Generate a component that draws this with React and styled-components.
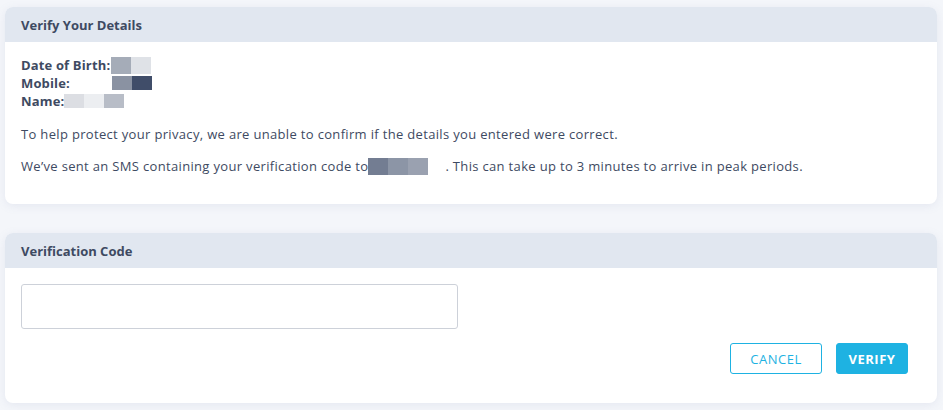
import React from "react";
import styled, { createGlobalStyle } from "styled-components";

const Global = createGlobalStyle`
  html, body { margin: 0; padding: 0; background: #f4f6fa; }
  body { font-family: "Open Sans", "DejaVu Sans", sans-serif; color: #3e4a62; }
  * { box-sizing: border-box; }
`;

const Page = styled.div`
  width: 943px;
  height: 410px;
  padding: 7px 6px 0 5px;
  display: flex;
  flex-direction: column;
  gap: 29px;
`;

const Card = styled.section`
  background: #fff;
  border-radius: 8px;
  overflow: hidden;
  box-shadow: 0 2px 10px rgba(120, 135, 170, 0.12);
`;

const CardHeader = styled.header`
  height: 35px;
  background: #e1e7f0;
  display: flex;
  align-items: center;
  padding: 0 16px;
  font-size: 13px;
  font-weight: 700;
  color: #3e4a62;
`;

const CardBody = styled.div`
  padding: ${(p) => p.$pad || "14px 16px 29px"};
  font-size: 13px;
`;

const Details = styled.div`
  display: flex;
  flex-direction: column;
  font-weight: 700;
  line-height: 18px;
  margin-bottom: 15px;
  letter-spacing: 0.15px;
`;

const DetailRow = styled.div`
  display: flex;
  align-items: center;
  height: 18px;
`;

const Blur = styled.span`
  display: inline-block;
  flex: none;
  width: 20px;
  height: ${(p) => p.$h || 16}px;
  background: ${(p) => p.$c};
  vertical-align: middle;
`;

const Gap = styled.span`
  display: inline-block;
  flex: none;
  width: ${(p) => p.$w}px;
`;

const Para = styled.p`
  margin: 0 0 14px;
  line-height: 18px;
  font-weight: 400;
  letter-spacing: 0.33px;
  color: #3e4a62;
  display: flex;
  align-items: center;
  white-space: pre;
  &:last-child { margin-bottom: 0; }
`;

const Input = styled.input`
  display: block;
  width: 437px;
  height: 45px;
  border: 1px solid #cdd1d9;
  border-radius: 3px;
  font: inherit;
  padding: 0 12px;
  outline: none;
`;

const Actions = styled.div`
  display: flex;
  justify-content: flex-end;
  gap: 14px;
  margin-top: 14px;
  padding-right: 13px;
`;

const Button = styled.button`
  width: ${(p) => (p.$primary ? 72 : 92)}px;
  height: 31px;
  padding: 0;
  border-radius: 3px;
  font-family: inherit;
  font-size: 13px;
  letter-spacing: 0.5px;
  font-weight: ${(p) => (p.$primary ? 700 : 500)};
  border: 1px solid #1eb2e2;
  background: ${(p) => (p.$primary ? "#1eb2e2" : "#fff")};
  color: ${(p) => (p.$primary ? "#fff" : "#1eb2e2")};
  cursor: pointer;
`;

export default function App() {
  return (
    <>
      <Global />
      <Page>
        <Card>
          <CardHeader>Verify Your Details</CardHeader>
          <CardBody>
            <Details>
              <DetailRow>
                Date of Birth:
                <Gap $w={1} />
                <Blur $c="#a5acb8" $h={17} />
                <Blur $c="#dfe2e7" $h={17} />
              </DetailRow>
              <DetailRow>
                Mobile:
                <Gap $w={42} />
                <Blur $c="#8a92a2" $h={14} />
                <Blur $c="#404d69" $h={14} />
              </DetailRow>
              <DetailRow>
                Name:
                <Blur $c="#dcdee3" $h={14} />
                <Blur $c="#eceef1" $h={14} />
                <Blur $c="#b8bdc7" $h={14} />
              </DetailRow>
            </Details>
            <Para>
              To help protect your privacy, we are unable to confirm if the details you entered were correct.
            </Para>
            <Para>
              We’ve sent an SMS containing your verification code to
              <Blur $c="#737d92" $h={17} />
              <Blur $c="#8c95a6" $h={17} />
              <Blur $c="#9aa1b0" $h={17} />
              <Gap $w={17} />. This can take up to 3 minutes to arrive in peak periods.
            </Para>
          </CardBody>
        </Card>
        <Card>
          <CardHeader>Verification Code</CardHeader>
          <CardBody $pad="16px 16px 29px">
            <Input type="text" />
            <Actions>
              <Button>CANCEL</Button>
              <Button $primary>VERIFY</Button>
            </Actions>
          </CardBody>
        </Card>
      </Page>
    </>
  );
}
